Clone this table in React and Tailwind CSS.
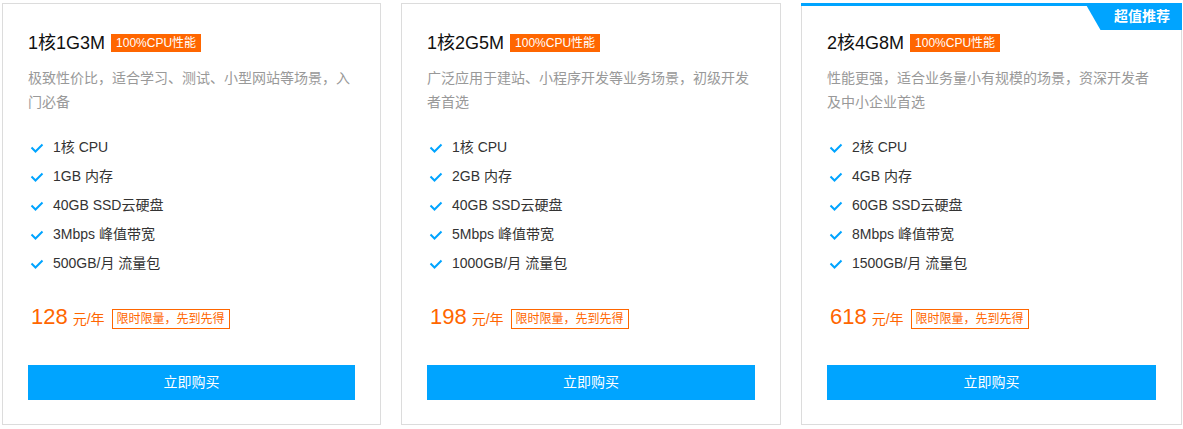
import React from "react";

const plans = [
  {
    title: "1核1G3M",
    desc: "极致性价比，适合学习、测试、小型网站等场景，入门必备",
    features: ["1核 CPU", "1GB 内存", "40GB SSD云硬盘", "3Mbps 峰值带宽", "500GB/月 流量包"],
    price: "128",
    w: "w-[379px]",
  },
  {
    title: "1核2G5M",
    desc: "广泛应用于建站、小程序开发等业务场景，初级开发者首选",
    features: ["1核 CPU", "2GB 内存", "40GB SSD云硬盘", "5Mbps 峰值带宽", "1000GB/月 流量包"],
    price: "198",
    w: "w-[380px]",
  },
  {
    title: "2核4G8M",
    desc: "性能更强，适合业务量小有规模的场景，资深开发者及中小企业首选",
    features: ["2核 CPU", "4GB 内存", "60GB SSD云硬盘", "8Mbps 峰值带宽", "1500GB/月 流量包"],
    price: "618",
    recommended: true,
    w: "w-[381px]",
  },
];

function Check() {
  return (
    <svg width="14" height="10" viewBox="0 0 14 10" className="shrink-0">
      <polyline points="1.5,4.5 5.5,8.5 12.5,1.5" fill="none" stroke="#00a4ff" strokeWidth="2" />
    </svg>
  );
}

function Card({ plan }) {
  return (
    <div className={`relative shrink-0 ${plan.w} border border-[#dcdcdc] bg-white px-[25px] pt-[30px] pb-[24px]`}>
      {plan.recommended && (
        <>
          <div className="absolute -top-px -left-px -right-px h-[3px] bg-[#00a4ff]" />
          <div
            className="absolute -top-px -right-px h-[27px] w-[97px] bg-[#00a4ff] flex items-center justify-end pr-[12px] text-white text-[14px] font-bold"
            style={{ clipPath: "polygon(0 0, 100% 0, 100% 100%, 16% 100%)" }}
          >
            超值推荐
          </div>
        </>
      )}
      <div className="flex items-center h-[18px]">
        <span className="text-[18px] text-[#111] leading-[18px]">{plan.title}</span>
        <span className="ml-[6px] bg-[#ff6600] text-white text-[12px] leading-[18px] px-[5px] h-[18px]">
          100%CPU性能
        </span>
      </div>
      <p className="mt-[14px] text-[14px] leading-[24px] text-[#999]">{plan.desc}</p>
      <ul className="mt-[19px]">
        {plan.features.map((f) => (
          <li key={f} className="flex items-center h-[29px] text-[14px] text-[#333]">
            <span className="w-[25px] pl-[2px] flex items-center">
              <Check />
            </span>
            <span>{f}</span>
          </li>
        ))}
      </ul>
      <div className="mt-[24px] flex items-center h-[30px] text-[#ff6600] pl-[3px]">
        <span className="text-[22px] leading-[30px]">{plan.price}</span>
        <span className="ml-[5px] text-[14px] mt-[4px]">元/年</span>
        <span className="ml-[7px] mt-[4px] border border-[#ff6600] text-[12px] leading-[18px] px-[4px]">
          限时限量，先到先得
        </span>
      </div>
      <button className="mt-[33px] w-full h-[35px] bg-[#00a4ff] text-white text-[14px]">
        立即购买
      </button>
    </div>
  );
}

export default function App() {
  return (
    <div
      className="bg-white w-[1183px] h-[429px] pl-[2px] pt-[3px]"
      style={{ fontFamily: '"Liberation Sans", "Noto Sans CJK SC", sans-serif' }}
    >
      <div className="flex gap-[20px]">
        {plans.map((p) => (
          <Card key={p.title} plan={p} />
        ))}
      </div>
    </div>
  );
}
